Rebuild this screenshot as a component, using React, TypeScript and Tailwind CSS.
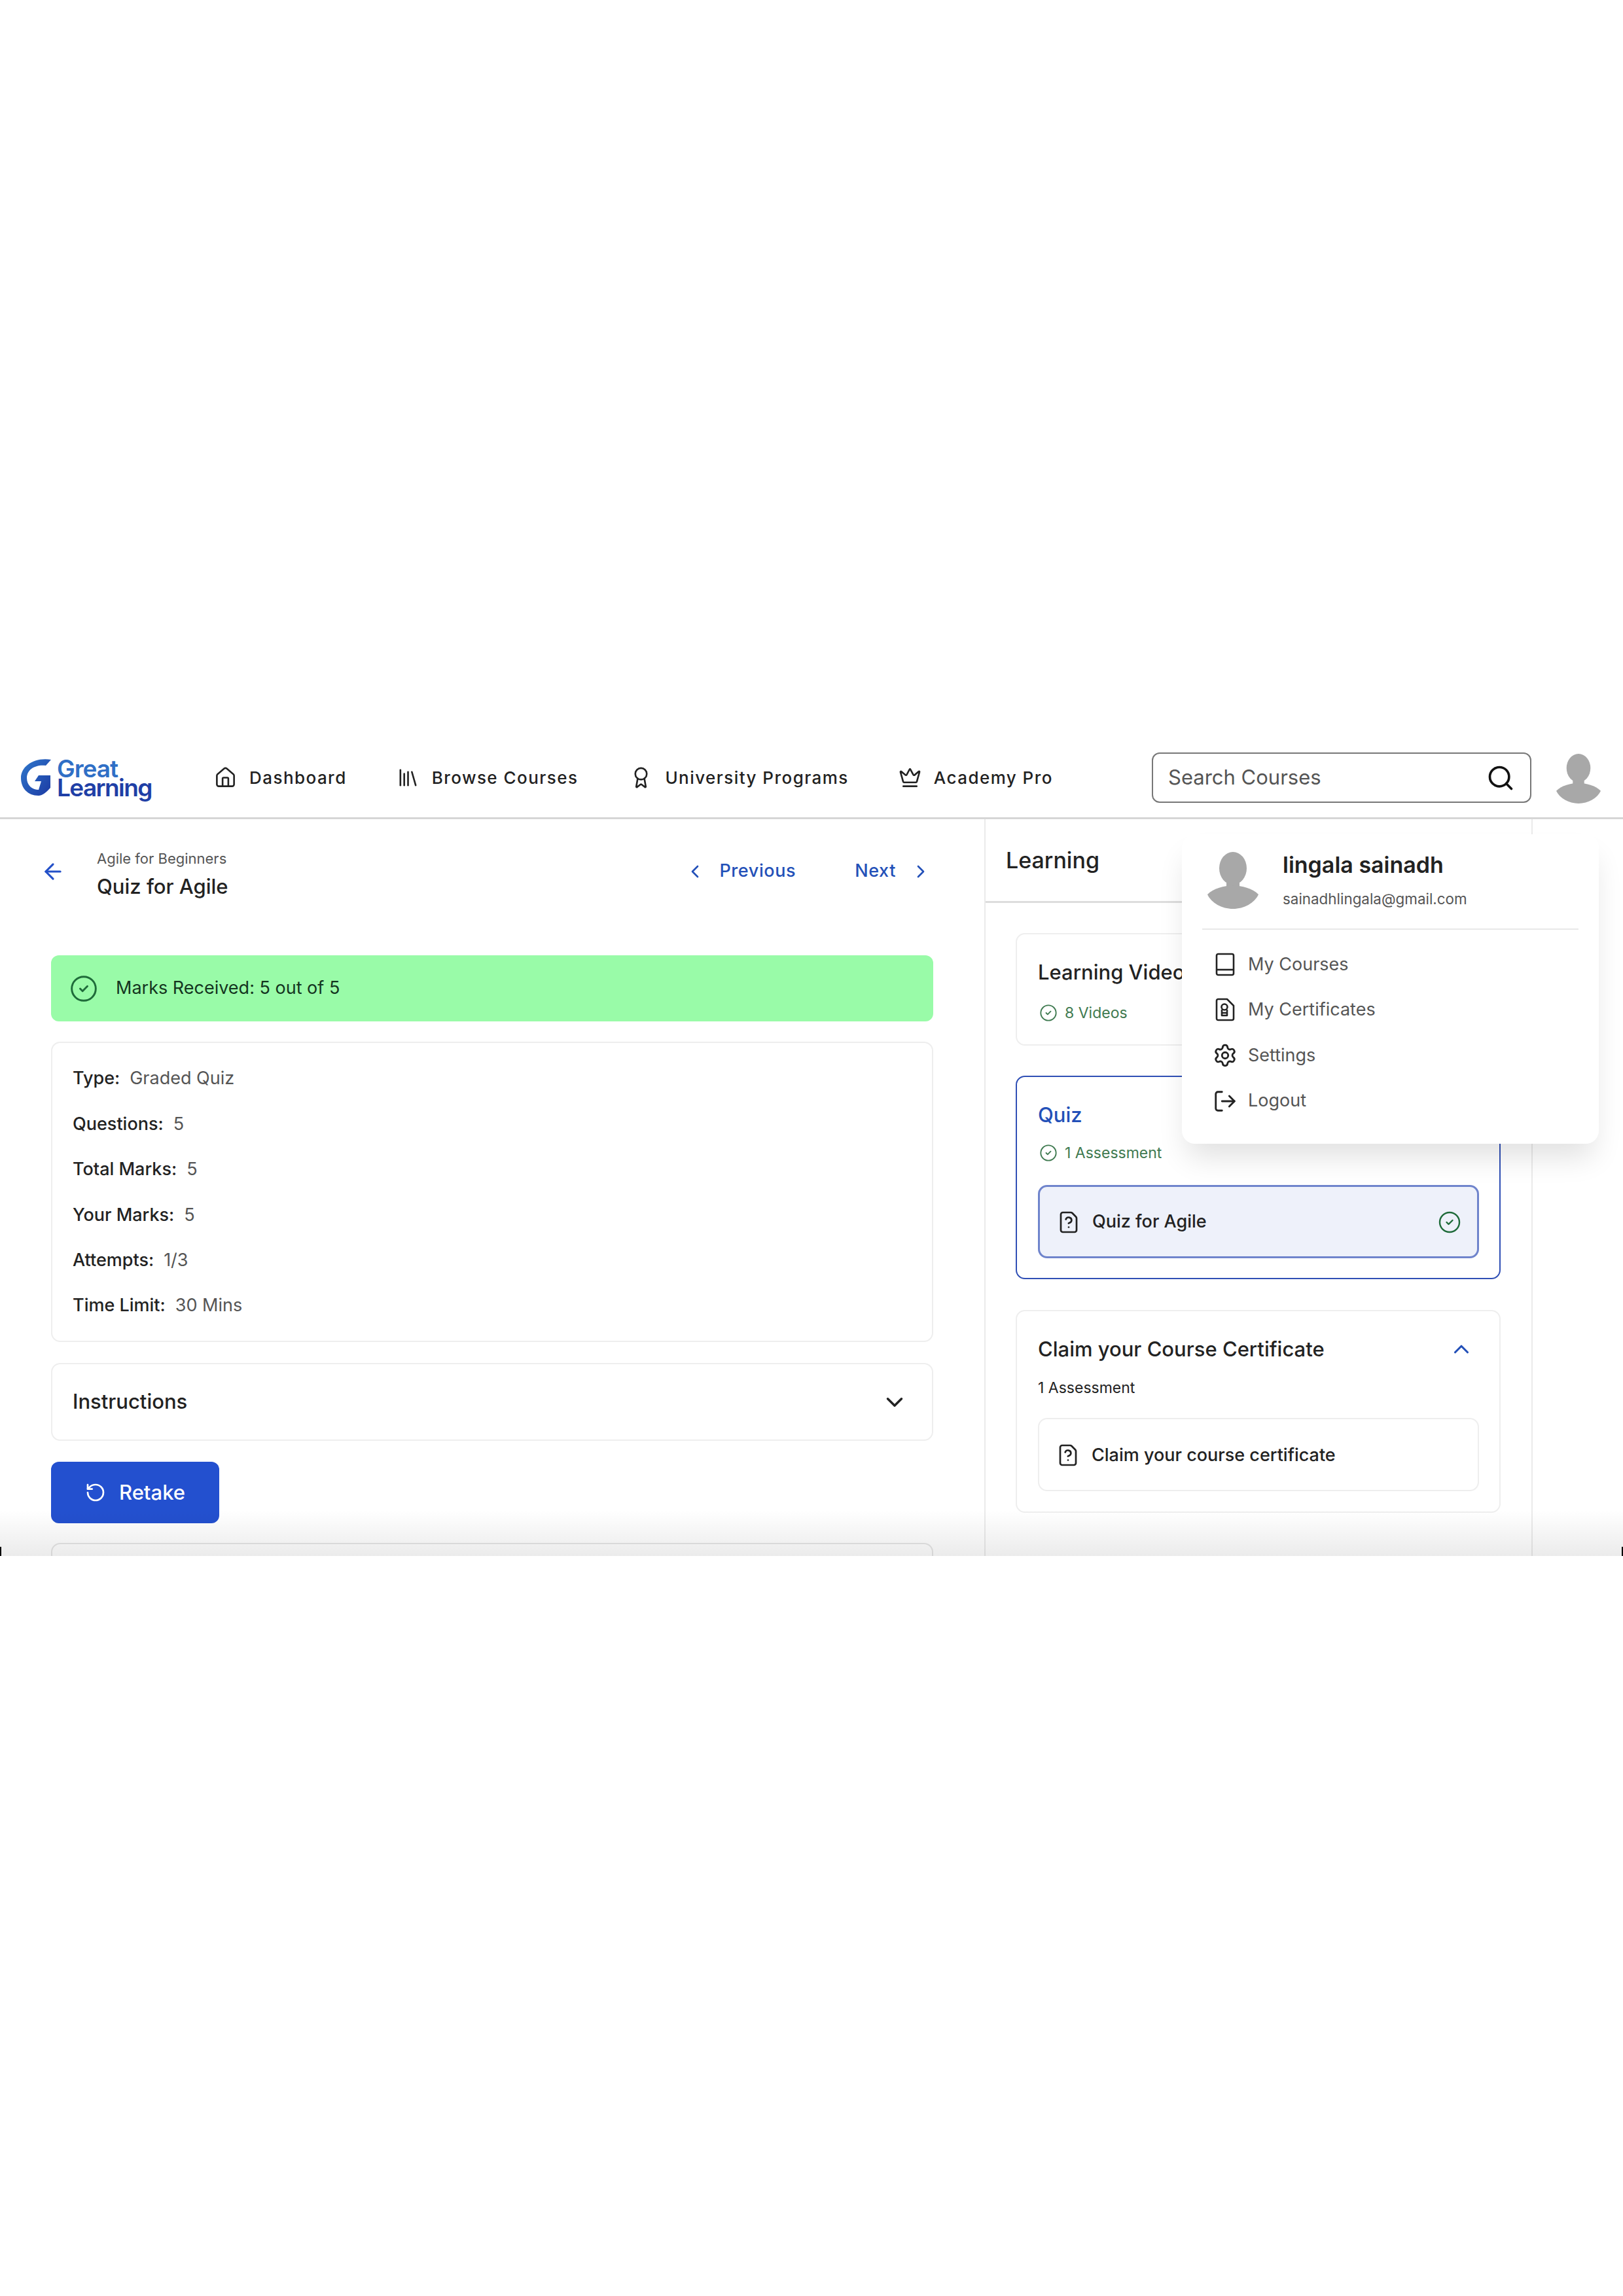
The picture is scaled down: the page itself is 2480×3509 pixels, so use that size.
import { ArrowLeft, Award, ChevronDown, ChevronLeft, ChevronRight, ChevronUp, CircleCheck, Crown, FileQuestion, House, Library, LogOut, RotateCcw, Search, Settings } from 'lucide-react'

const navItems = [
    { label: 'Dashboard', icon: House, gap: 'ml-[76px]' },
    { label: 'Browse Courses', icon: Library, gap: 'ml-[76px]' },
    { label: 'University Programs', icon: Award, gap: 'ml-[79px]' },
    { label: 'Academy Pro', icon: Crown, gap: 'ml-[76px]' },
]

const quizInfo = [
    ['Type:', 'Graded Quiz'],
    ['Questions:', '5'],
    ['Total Marks:', '5'],
    ['Your Marks:', '5'],
    ['Attempts:', '1/3'],
    ['Time Limit:', '30 Mins'],
]

function BookIcon() {
    return (
        <svg viewBox="0 0 30 36" className="w-[30px] h-[36px] shrink-0 text-[#222]" fill="none" stroke="currentColor" strokeWidth="2.6">
            <rect x="2" y="2" width="26" height="32" rx="2.5" />
            <path d="M2 26 H28" />
        </svg>
    )
}

function CertificateIcon() {
    return (
        <svg viewBox="0 0 30 36" className="w-[30px] h-[36px] shrink-0 text-[#222]" fill="none" stroke="currentColor" strokeWidth="2.6" strokeLinejoin="round">
            <path d="M4.5 2 H18 L28 12 V31.5 C28 33 27 34 25.5 34 H4.5 C3 34 2 33 2 31.5 V4.5 C2 3 3 2 4.5 2 Z" />
            <circle cx="14" cy="14" r="4.5" />
            <path d="M10 18 V27 H18 V18 M10 23 H18" />
        </svg>
    )
}

const menuItems = [
    { label: 'My Courses', icon: <BookIcon /> },
    { label: 'My Certificates', icon: <CertificateIcon /> },
    { label: 'Settings', icon: <Settings className="w-[38px] h-[38px] shrink-0 text-[#222]" strokeWidth={1.8} /> },
    { label: 'Logout', icon: <LogOut className="w-[38px] h-[38px] shrink-0 text-[#222]" strokeWidth={1.8} /> },
]

function Avatar({ className }: { className: string }) {
    return (
        <svg viewBox="0 0 78 87" className={className} fill="#a8a8a8">
            <ellipse cx="39" cy="25" rx="21" ry="25" />
            <rect x="29" y="40" width="20" height="15" />
            <path d="M0 65 C10 55 25 52 39 51 C53 52 68 55 78 65 C72 78 56 87 39 87 C22 87 6 78 0 65 Z" />
        </svg>
    )
}

function Logo() {
    return (
        <div className="flex items-start w-[204px] h-[64px]">
            <svg viewBox="0 0 46 57" className="w-[46px] h-[57px] ml-[2px] mt-[3px] shrink-0">
                <defs>
                    <linearGradient id="gl" x1="0" y1="0" x2="1" y2="1">
                        <stop offset="0" stopColor="#2f78cc" />
                        <stop offset="1" stopColor="#1c3aa3" />
                    </linearGradient>
                </defs>
                <path d="M46 1 L38 10 C22 8 9 16 9 29 C9 40 17 47 27 47 L31 34 L21 34 L27 25 L45 25 L45 44 C38 52 32 56 27 56 C10 56 0 44 0 29 C0 11 20 -3 46 1 Z" fill="url(#gl)" />
            </svg>
            <div className="ml-[9px] flex flex-col font-semibold tracking-[-1.6px] text-[37px] leading-[29px] pt-[3px]">
                <span className="text-[#2f6fc6] tracking-[-1px]">Great</span>
                <span className="text-[#1f3fa6]">Learning</span>
            </div>
        </div>
    )
}

function Header() {
    return (
        <header className="h-[132px] border-b-[3px] border-[#d6d6d6] flex items-center pl-[30px] pt-[8px]">
            <Logo />
            <nav className="flex items-center ml-[17px]">
                {navItems.map((item) => (
                    <div key={item.label} className={`flex items-center gap-[19px] ${item.gap}`}>
                        <item.icon className="w-[35px] h-[35px] shrink-0 text-[#222]" strokeWidth={1.8} />
                        <span className="text-[26px] font-medium tracking-[1.45px] text-[#222]">{item.label}</span>
                    </div>
                ))}
            </nav>
            <div className="absolute left-[1760px] top-[30px] w-[580px] h-[77px] border-2 border-[#777] rounded-[12px] flex items-center justify-between pl-[23px] pr-[23px]">
                <span className="text-[31px] text-[#555]">Search Courses</span>
                <Search className="w-[44px] h-[44px] text-[#111]" strokeWidth={2} />
            </div>
            <Avatar className="absolute left-[2378px] top-[32px] w-[68px] h-[76px]" />
        </header>
    )
}

function LeftPanel() {
    return (
        <div className="w-[1504px] shrink-0">
            <div className="flex items-center h-[151px] pl-[62px] pr-[81px] pt-[8px]">
                <ArrowLeft className="w-[38px] h-[38px] text-[#2350c8]" strokeWidth={2} />
                <div className="ml-[48px] mt-[8px] flex flex-col gap-[10px]">
                    <span className="text-[22px] leading-[28px] text-[#555]">Agile for Beginners</span>
                    <span className="text-[31px] leading-[38px] font-medium text-[#222]">Quiz for Agile</span>
                </div>
                <div className="ml-auto flex items-center text-[#2350b8]">
                    <ChevronLeft className="w-[32px] h-[32px]" strokeWidth={2} />
                    <span className="ml-[21px] text-[27px] font-medium tracking-[0.6px]">Previous</span>
                    <span className="ml-[90px] text-[27px] font-medium tracking-[0.6px]">Next</span>
                    <ChevronRight className="ml-[22px] w-[32px] h-[32px]" strokeWidth={2} />
                </div>
            </div>
            <div className="pl-[78px] w-[1426px]">
                <div className="mt-[57px] h-[101px] rounded-[12px] bg-[#99fba8] flex items-center pl-[28px]">
                    <CircleCheck className="w-[44px] h-[44px] text-[#1f6b3a]" strokeWidth={1.6} />
                    <span className="ml-[27px] text-[27px] text-[#14351f]">Marks Received: 5 out of 5</span>
                </div>
                <div className="mt-[31px] h-[459px] rounded-[14px] border-2 border-[#eeeeee] pl-[31px] pt-[20px] flex flex-col">
                    {quizInfo.map(([label, value]) => (
                        <div key={label} className="h-[69.4px] flex items-center text-[27px]">
                            <span className="font-medium text-[#222]">{label}</span>
                            <span className="ml-[15px] text-[#555]">{value}</span>
                        </div>
                    ))}
                </div>
                <div className="mt-[32px] h-[119px] rounded-[14px] border-2 border-[#eeeeee] pl-[31px] pr-[36px] flex items-center justify-between">
                    <span className="text-[31px] font-medium text-[#222]">Instructions</span>
                    <ChevronDown className="w-[42px] h-[42px] text-[#222]" strokeWidth={2} />
                </div>
                <button className="mt-[32px] h-[94px] w-[257px] rounded-[12px] bg-[#2350cf] text-white flex items-center pl-[52px]">
                    <RotateCcw className="w-[32px] h-[32px]" strokeWidth={2} />
                    <span className="ml-[20px] text-[31px] font-medium">Retake</span>
                </button>
                <div className="mt-[30px] h-[60px] rounded-t-[14px] border-2 border-[#e6e6e6]" />
            </div>
        </div>
    )
}

function QuizRow({ label, done }: { label: string; done?: boolean }) {
    return (
        <div className={`h-[112px] rounded-[14px] flex items-center pl-[26px] pr-[24px] pt-[2px] ${done ? 'border-[3px] border-[#6f84cc] bg-[#eef1fa]' : 'border-2 border-[#eeeeee]'}`}>
            <FileQuestion className="w-[36px] h-[36px] text-[#222]" strokeWidth={1.8} />
            <span className="ml-[18px] text-[27px] font-medium text-[#222]">{label}</span>
            {done && <CircleCheck className="ml-auto w-[36px] h-[36px] text-[#1f6b3a]" strokeWidth={1.6} />}
        </div>
    )
}

function RightPanel() {
    return (
        <div className="w-[838px] shrink-0 border-x-2 border-[#eaeaea]">
            <div className="h-[128px] border-b-[3px] border-[#dddddd] pl-[31px] pt-[41px]">
                <span className="text-[34px] leading-[44px] font-medium text-[#222]">Learning</span>
            </div>
            <div className="pl-[46px] w-[787px] flex flex-col">
                <div className="mt-[46px] h-[172px] rounded-[14px] border-2 border-[#eeeeee] pl-[32px] pt-[36px]">
                    <div className="text-[31px] leading-[44px] font-medium text-[#222]">Learning Videos</div>
                    <div className="mt-[23px] pl-[2px] flex items-center text-[#3f7a50]">
                        <CircleCheck className="w-[28px] h-[28px]" strokeWidth={1.6} />
                        <span className="ml-[11px] text-[23px]">8 Videos</span>
                    </div>
                </div>
                <div className="mt-[46px] h-[311px] rounded-[14px] border-2 border-[#2f4fb5] pl-[32px] pr-[31px] pt-[36px]">
                    <div className="text-[31px] leading-[44px] font-medium text-[#2350b8]">Quiz</div>
                    <div className="mt-[19px] pl-[2px] flex items-center text-[#3f7a50]">
                        <CircleCheck className="w-[28px] h-[28px]" strokeWidth={1.6} />
                        <span className="ml-[11px] text-[23px]">1 Assessment</span>
                    </div>
                    <div className="mt-[31px]">
                        <QuizRow label="Quiz for Agile" done />
                    </div>
                </div>
                <div className="mt-[47px] h-[310px] rounded-[14px] border-2 border-[#eeeeee] pl-[32px] pr-[31px] pt-[36px]">
                    <div className="flex items-center justify-between pr-[8px]">
                        <span className="text-[31px] leading-[44px] font-medium text-[#222]">Claim your Course Certificate</span>
                        <ChevronUp className="w-[38px] h-[38px] text-[#2350b8]" strokeWidth={2} />
                    </div>
                    <div className="mt-[22px] text-[23px] leading-[30px] text-[#222]">1 Assessment</div>
                    <div className="mt-[31px]">
                        <QuizRow label="Claim your course certificate" />
                    </div>
                </div>
            </div>
        </div>
    )
}

function ProfileMenu() {
    return (
        <div className="absolute left-[1806px] top-[155px] w-[637px] h-[473px] rounded-[20px] bg-white shadow-[0_28px_45px_-8px_rgba(0,0,0,0.12)] px-[31px]">
            <div className="h-[146px] border-b-2 border-[#e8e8e8] flex items-start pt-[27px] pl-[8px]">
                <Avatar className="w-[78px] h-[87px]" />
                <div className="ml-[37px] flex flex-col">
                    <span className="-mt-[2px] text-[34px] leading-[44px] font-semibold text-[#222]">lingala sainadh</span>
                    <span className="mt-[15px] text-[22.4px] leading-[30px] text-[#555]">sainadhlingala@gmail.com</span>
                </div>
            </div>
            <div className="pt-[18px] pl-[20px] flex flex-col">
                {menuItems.map((item) => (
                    <div key={item.label} className="h-[69.6px] flex items-center">
                        <span className="w-[30px] flex justify-center">{item.icon}</span>
                        <span className="ml-[20px] text-[27px] text-[#555]">{item.label}</span>
                    </div>
                ))}
            </div>
        </div>
    )
}

export default function App() {
    return (
        <div className="w-[2480px] h-[3509px] bg-white pt-[1120px] [font-family:Inter,sans-serif]">
            <div className="relative h-[1258px] overflow-hidden">
                <Header />
                <div className="flex">
                    <LeftPanel />
                    <RightPanel />
                </div>
                <ProfileMenu />
                <div className="absolute left-0 right-0 bottom-0 h-[70px] bg-gradient-to-b from-transparent to-[#00000014]" />
                <div className="absolute left-0 bottom-0 w-[2px] h-[14px] bg-black" />
                <div className="absolute right-0 bottom-0 w-[2px] h-[14px] bg-black" />
            </div>
        </div>
    )
}
